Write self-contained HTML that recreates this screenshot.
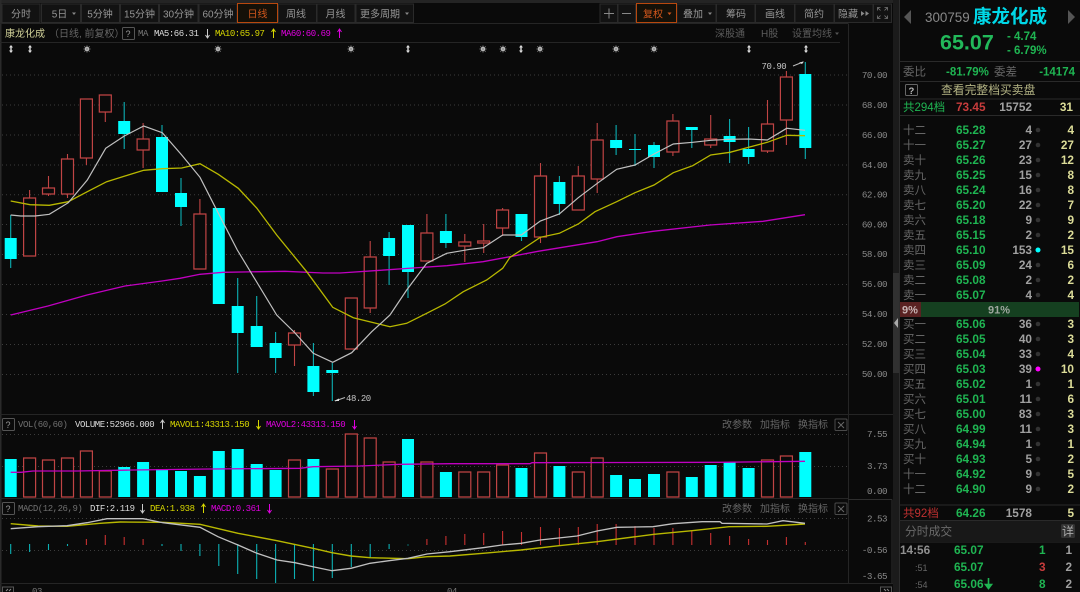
<!DOCTYPE html>
<html><head><meta charset="utf-8"><style>
html,body{margin:0;padding:0;background:#0a0a0a;width:1080px;height:592px;overflow:hidden}
svg{display:block;filter:blur(.3px)}
text{font-family:"Liberation Sans","Noto Sans CJK SC",sans-serif;white-space:pre}
.c{font-size:10px;fill:#777}
.bt{font-size:10px;fill:#959595;text-anchor:middle}
.m{font-family:"Liberation Mono","Noto Sans CJK SC",monospace;font-size:9px;letter-spacing:-.45px}
.ax{font-family:"Liberation Mono",monospace;font-size:9.2px;letter-spacing:-.5px;fill:#8a8a8a;text-anchor:end}
.l{font-size:11.5px;fill:#666}
.p{font-size:11.8px;font-weight:bold;fill:#1fb552}
.v{font-size:11.8px;font-weight:bold;fill:#a0a0a0;text-anchor:end}
.n{font-size:11.8px;font-weight:bold;fill:#dcdc98;text-anchor:end}
.d{fill:#333}
</style></head><body>
<svg width="1080" height="592" viewBox="0 0 1080 592" xmlns="http://www.w3.org/2000/svg">
<defs>
<g id="st"><circle r="2.2" fill="#ddd"/><path d="M-3.5 0H3.5M0-3.5V3.5M-2.6-2.6L2.6 2.6M-2.6 2.6L2.6-2.6" stroke="#999" stroke-width=".8"/></g>
<g id="ud"><path d="M0-4L2-1.5H-2zM0 4L2 1.5H-2z" fill="#ddd"/><path d="M0-2V2" stroke="#ddd" stroke-width="1.4"/></g>
</defs>
<rect width="1080" height="592" fill="#0a0a0a"/>
<rect width="893" height="3" fill="#242424"/>
<rect x="0" width="1.5" height="592" fill="#2a2a2a"/>

<!-- toolbar -->
<g fill="#121212" stroke="#2a2a2a">
<rect x="2" y="4" width="38" height="18.5"/><rect x="41.5" y="4" width="39" height="18.5"/><rect x="81.5" y="4" width="38" height="18.5"/><rect x="120.5" y="4" width="38" height="18.5"/><rect x="159.5" y="4" width="38.5" height="18.5"/><rect x="199" y="4" width="38" height="18.5"/>
<rect x="278.5" y="4" width="38" height="18.5"/><rect x="317" y="4" width="38" height="18.5"/><rect x="356" y="4" width="57.5" height="18.5"/>
<rect x="600" y="4" width="17.5" height="18.5"/><rect x="618" y="4" width="17.5" height="18.5"/><rect x="677" y="4" width="39" height="18.5"/><rect x="716.5" y="4" width="38.5" height="18.5"/><rect x="755.5" y="4" width="39" height="18.5"/><rect x="795" y="4" width="39" height="18.5"/><rect x="834.5" y="4" width="38.5" height="18.5"/><rect x="873.5" y="4" width="18" height="18.5"/>
</g>
<rect x="237.5" y="3.5" width="40" height="19" fill="#141008" stroke="#b8480e"/>
<rect x="636.5" y="3.5" width="40" height="19" fill="#141008" stroke="#b8480e"/>
<g>
<text class="bt" x="21" y="17.5">分时</text>
<text class="bt" x="59.5" y="17.5">5日</text>
<text class="bt" x="100" y="17.5">5分钟</text>
<text class="bt" x="139.5" y="17.5">15分钟</text>
<text class="bt" x="178.5" y="17.5">30分钟</text>
<text class="bt" x="218" y="17.5">60分钟</text>
<text class="bt" x="257.5" y="17.5" style="fill:#d0561c">日线</text>
<text class="bt" x="296" y="17.5">周线</text>
<text class="bt" x="335.5" y="17.5">月线</text>
<text class="bt" x="380" y="17.5">更多周期</text>
<text class="bt" x="653" y="17.5" style="fill:#d0561c">复权</text>
<text class="bt" x="693" y="17.5">叠加</text>
<text class="bt" x="736" y="17.5">筹码</text>
<text class="bt" x="775" y="17.5">画线</text>
<text class="bt" x="814" y="17.5">简约</text>
<text class="bt" x="848" y="17.5">隐藏</text>
</g>
<path d="M72 12.5h4l-2 2.5zM405 12.5h4l-2 2.5zM708 12.5h4l-2 2.5z" fill="#888"/>
<path d="M667.5 12.5h4l-2 2.5z" fill="#d0561c"/>
<path d="M861 11l3.5 2.5-3.5 2.5zM865.5 11l3.5 2.5-3.5 2.5z" fill="#888"/>
<path d="M604 13.5h10M609 8.5v10M622 13.5h9" stroke="#888" stroke-width="1" fill="none"/>
<path d="M877.5 10.5v-3h3M884.5 7.5h3v3M887.5 15.5v3h-3M880.5 18.5h-3v-3M878 8l2.5 2.5M887 8l-2.5 2.5M887 18l-2.5-2.5M878 18l2.5-2.5" stroke="#777" stroke-width=".8" fill="none"/>

<!-- header -->
<path d="M0 23.5H848M0 42.5H840M0 414.5H893M0 498.5H848M0 583.5H893M848.5 23.5V583M848 499.5H892" stroke="#252525" fill="none"/>
<path d="M848 499.5H892M892 499.5V583" stroke="#2e2e2e" fill="none"/>
<text class="c" x="5" y="37" style="fill:#d0d098">康龙化成</text>
<text class="c" x="49" y="37" style="fill:#666">（日线, 前复权）</text>
<rect x="122.5" y="27.5" width="12" height="12" rx="1" fill="none" stroke="#555"/><text x="125.5" y="37" style="font-size:9px;fill:#999">?</text>
<text class="m" x="138" y="36" style="fill:#777">MA</text>
<text class="m" x="154" y="36" style="fill:#ddd">MA5:66.31</text>
<text class="m" x="215" y="36" style="fill:#d8d800">MA10:65.97</text>
<text class="m" x="281" y="36" style="fill:#e000e0">MA60:60.69</text>
<path d="M207.5 29v9M205.5 35l2 3 2-3" stroke="#ccc" fill="none"/>
<path d="M273.5 38v-9M271.5 32l2-3 2 3" stroke="#d8d800" fill="none"/>
<path d="M339.5 38v-9M337.5 32l2-3 2 3" stroke="#e000e0" fill="none"/>
<text class="c" x="715" y="37" style="fill:#5c5c5c">深股通</text>
<text class="c" x="761" y="37" style="fill:#5c5c5c">H股</text>
<text class="c" x="792" y="37" style="fill:#5c5c5c">设置均线</text>
<path d="M835 32.5h4l-2 2.5z" fill="#555"/>
<use href="#ud" x="11" y="49"/><use href="#ud" x="30" y="49"/><use href="#st" x="87" y="49"/><use href="#st" x="218" y="49"/><use href="#st" x="351" y="49"/><use href="#ud" x="408" y="49"/><use href="#st" x="483" y="49"/><use href="#st" x="503" y="49"/><use href="#ud" x="521" y="49"/><use href="#st" x="540" y="49"/><use href="#st" x="616" y="49"/><use href="#st" x="654" y="49"/><use href="#ud" x="749" y="49"/><use href="#ud" x="806" y="49"/>

<!-- grid -->
<path d="M2 75H850M2 105H850M2 135H850M2 165H850M2 194.7H850M2 224.5H850M2 254.5H850M2 284.5H850M2 314.5H850M2 344.5H850M2 374.5H850M2 434.5H850M2 466.5H850M2 518.5H850M2 550.5H850" stroke="#3c3c3c" stroke-dasharray="1 3" fill="none"/>

<!-- axis -->
<text class="ax" x="887" y="78">70.00</text><text class="ax" x="887" y="108">68.00</text><text class="ax" x="887" y="138">66.00</text><text class="ax" x="887" y="168">64.00</text><text class="ax" x="887" y="197.5">62.00</text><text class="ax" x="887" y="227.5">60.00</text><text class="ax" x="887" y="257">58.00</text><text class="ax" x="887" y="287">56.00</text><text class="ax" x="887" y="317">54.00</text><text class="ax" x="887" y="347">52.00</text><text class="ax" x="887" y="377">50.00</text>
<text class="ax" x="887" y="437">7.55</text><text class="ax" x="887" y="469">3.73</text><text class="ax" x="887" y="494">0.00</text>
<text class="ax" x="887" y="521.5">2.53</text><text class="ax" x="887" y="553">-0.56</text><text class="ax" x="887" y="579">-3.65</text>

<!-- wicks -->
<path d="M10.7 215V268M124.2 102V149M162 125V192M181 178V226M237.7 278V373M256.7 296V326M275.6 332V373M313.4 343V396M332.3 363V401M389.1 232V285M408 225V298M445.9 214V248M521.5 214V241M559.4 176V215M616.1 125V155M635 134V166M654 142V168M691.8 127V148M729.6 119V163M748.6 127V164M805.3 62V159" stroke="#0cb0b4" stroke-width="1.1" fill="none"/>
<path d="M29.6 190V198M48.5 176V196M67.5 154V198M86.4 158V165M105.3 112V122M143.1 123V168M199.9 199V214M294.5 330V366M370.2 241V313M426.9 214V233M464.8 234V262M483.7 224V253M502.6 208V236M540.5 163V243M578.3 166V176M597.2 123V193M672.9 114V156M710.7 115V148M767.5 100V153M786.4 71V145" stroke="#c04444" stroke-width="1.1" fill="none"/>
<!-- candle bodies -->
<path d="M23.6 198h12v58h-12zM42.5 188h12v6h-12zM61.5 159h12v35h-12zM80.4 99h12v59h-12zM99.3 95h12v17h-12zM137.1 139h12v11h-12zM193.9 214h12v55h-12zM288.5 333h12v12h-12zM345.3 298h12v51h-12zM364.2 257h12v51h-12zM420.9 233h12v28h-12zM458.8 242h12v4h-12zM477.7 241h12v2h-12zM496.6 210h12v18h-12zM534.5 176h12v61h-12zM572.3 176h12v34h-12zM591.2 140h12v39h-12zM666.9 121h12v31h-12zM704.7 139h12v6h-12zM761.5 124h12v27h-12zM780.4 77h12v43h-12z" fill="#0a0a0a" stroke="#c04444" stroke-width="1.2"/>
<path d="M4.7 238h12v21h-12zM118.2 121h12v13h-12zM156 137h12v55h-12zM175 193h12v14h-12zM212.8 208h12v96h-12zM231.7 306h12v27h-12zM250.7 326h12v21h-12zM269.6 343h12v15h-12zM307.4 366h12v26h-12zM326.3 370h12v3h-12zM383.1 238h12v18h-12zM402 225h12v47h-12zM439.9 231h12v12h-12zM515.5 214h12v23h-12zM553.4 182h12v22h-12zM610.1 140h12v8h-12zM629 149h12v1h-12zM648 145h12v12h-12zM685.8 127h12v3h-12zM723.6 136h12v6h-12zM742.6 149h12v8h-12zM799.3 74h12v74h-12z" fill="#00ffff"/>
<!-- MAs -->
<path d="M10.7 315L48 306L87 295L125 286L162 281L180 278.3L200 274.3L223 272.3L285 271.3L323 273L340 273L380 270.3L413 268L447 265.7L483 261.7L510 256.7L538 251.3L597 241.7L617 236.7L653 231.3L710 225L763 221.3L805 214.7" fill="none" stroke="#c000c0" stroke-width="1.3"/>
<path d="M10.7 201L30 204.7L49.3 205.3L68.3 201.7L87.3 191.7L106.7 181.7L125 176L143.7 170.3L162.3 168.7L181.7 168L200 163.7L218.3 174.3L238.3 188.3L256.7 208L276.7 235L306.7 271.7L332.7 307.3L353.3 317.7L371.7 322.3L390 326.7L406.7 323.3L426.7 313.3L445 304L463.3 291.7L486.7 280L502.7 268.3L510 257.3L521.3 250L540.3 237.3L559.3 233.3L578.3 224L595 211.7L616.7 201.7L635 192.7L654 185L673.3 172.7L692.7 165.7L710.7 155L730 152.3L748.7 147.3L767.3 142.3L786.7 135.3L805 135.7" fill="none" stroke="#b8b800" stroke-width="1.3"/>
<path d="M10.7 215L20.7 216L35 216L49.3 214.3L68.3 202.7L87.3 180L105.7 148.3L124.3 136L143.7 126L162.3 132.7L181.7 155L200 177.3L215 206.7L237.3 250L276.7 315L295 333L313.3 353.3L332.7 362.3L351.7 352.7L371.7 331.7L390 315L406.7 290L426.7 263.3L446.7 253.3L470 249.3L483.3 247.7L502.7 235L521.3 235L540.3 221L559.3 214L578.3 197.7L597.3 183.3L616.7 169.3L635 165L654 154L673.3 144L692.7 142.3L710.7 140.3L730 139.3L748.7 139L767.3 140L786.7 128.3L805 130.3" fill="none" stroke="#c0c0c0" stroke-width="1.2"/>
<!-- hi/lo -->
<text class="m" x="761.5" y="69" style="fill:#c4c4c4">70.90</text>
<path d="M793 66L803 62" stroke="#bbb"/><path d="M799 62.5L804 61.5L802 64z" fill="#ddd"/>
<text class="m" x="346" y="401" style="fill:#c4c4c4">48.20</text>
<path d="M335 401L345 397.5" stroke="#bbb"/><path d="M334 401L339 398.5L339 401z" fill="#ddd"/>

<!-- VOL header -->
<rect x="2.5" y="418.5" width="12" height="12" rx="1" fill="none" stroke="#555"/><text x="5.5" y="428" style="font-size:9px;fill:#999">?</text>
<text class="m" x="18" y="427" style="fill:#707070">VOL(60,60)</text>
<text class="m" x="75" y="427" style="fill:#ddd">VOLUME:52966.000</text>
<text class="m" x="170" y="427" style="fill:#d8d800">MAVOL1:43313.150</text>
<text class="m" x="266" y="427" style="fill:#e000e0">MAVOL2:43313.150</text>
<path d="M162.5 429v-9M160.5 423l2-3 2 3" stroke="#ccc" fill="none"/>
<path d="M258.5 420v9M256.5 426l2 3 2-3" stroke="#d8d800" fill="none"/>
<path d="M354.5 420v9M352.5 426l2 3 2-3" stroke="#e000e0" fill="none"/>
<text class="c" x="722" y="428" style="fill:#666">改参数</text><text class="c" x="760" y="428" style="fill:#666">加指标</text><text class="c" x="798" y="428" style="fill:#666">换指标</text>
<text class="c" x="722" y="512" style="fill:#666">改参数</text><text class="c" x="760" y="512" style="fill:#666">加指标</text><text class="c" x="798" y="512" style="fill:#666">换指标</text>
<rect x="835" y="419" width="12" height="11.5" rx="1" fill="none" stroke="#4a4a4a"/><path d="M838 422l6 6M844 422l-6 6" stroke="#666"/>
<rect x="835" y="503" width="12" height="11.5" rx="1" fill="none" stroke="#4a4a4a"/><path d="M838 506l6 6M844 506l-6 6" stroke="#666"/>

<!-- volume bars -->
<path d="M23.6 458h12v39h-12zM42.5 460h12v37h-12zM61.5 458h12v39h-12zM80.4 451h12v46h-12zM99.3 471h12v26h-12zM288.5 460h12v37h-12zM326.3 469h12v28h-12zM345.3 434h12v63h-12zM364.2 438h12v59h-12zM383.1 462h12v35h-12zM420.9 462h12v35h-12zM458.8 472h12v25h-12zM477.7 472h12v25h-12zM496.6 465h12v32h-12zM534.5 453h12v44h-12zM572.3 472h12v25h-12zM591.2 458h12v39h-12zM666.9 472h12v25h-12zM761.5 460h12v37h-12zM780.4 456h12v41h-12z" fill="#0a0a0a" stroke="#c04444" stroke-width="1.2"/>
<path d="M4.7 459h12v38h-12zM118.2 467h12v30h-12zM137.1 462h12v35h-12zM156 469h12v28h-12zM175 471h12v26h-12zM193.9 476h12v21h-12zM212.8 451h12v46h-12zM231.7 449h12v48h-12zM250.7 464h12v33h-12zM269.6 470h12v27h-12zM307.4 459h12v38h-12zM402 439h12v58h-12zM439.9 472h12v25h-12zM515.5 468h12v29h-12zM553.4 466h12v31h-12zM610.1 475h12v22h-12zM629 479h12v18h-12zM648 474h12v23h-12zM685.8 477h12v20h-12zM704.7 465h12v32h-12zM723.6 462h12v35h-12zM742.6 468h12v29h-12zM799.3 452h12v45h-12z" fill="#00ffff"/>
<path d="M10.7 472.3L21 472.3L33 471L77 471L133 470L210 469L300 468.3L313 466.7L360 466L400 464.3L450 463.7L530 463.7L532 462.7L720 462.3L805 461.3" fill="none" stroke="#c000c0" stroke-width="1.3"/>

<!-- MACD header -->
<rect x="2.5" y="502.5" width="12" height="12" rx="1" fill="none" stroke="#555"/><text x="5.5" y="512" style="font-size:9px;fill:#999">?</text>
<text class="m" x="18" y="511" style="fill:#707070">MACD(12,26,9)</text>
<text class="m" x="90" y="511" style="fill:#ddd">DIF:2.119</text>
<text class="m" x="150" y="511" style="fill:#d8d800">DEA:1.938</text>
<text class="m" x="211" y="511" style="fill:#e000e0">MACD:0.361</text>
<path d="M142.5 504v9M140.5 510l2 3 2-3" stroke="#ccc" fill="none"/>
<path d="M203.5 513v-9M201.5 507l2-3 2 3" stroke="#d8d800" fill="none"/>
<path d="M269.5 504v9M267.5 510l2 3 2-3" stroke="#e000e0" fill="none"/>

<!-- MACD bars -->
<path d="M10.7 544V554M29.6 544V552M48.5 544V550M67.5 544V546M162 544V546M181 544V551M199.9 544V556M218.8 544V566M237.7 544V574M256.7 544V579M275.6 544V583M294.5 544V579M313.4 544V581M332.3 544V578M351.3 544V567M370.2 544V558M389.1 544V549M408 544.5V545.5" stroke="#0cb0b4" stroke-width="1.1" fill="none"/>
<path d="M86.4 539V545M105.3 535V545M124.2 537V545M143.1 539V545M426.9 539V545M445.9 536V545M464.8 534V545M483.7 533V545M502.6 531V545M521.5 532V545M540.5 527V545M559.4 528V545M578.3 527V545M597.2 524V545M616.1 524V545M635 526V545M654 528V545M672.9 528V545M691.8 531V545M710.7 533V545M729.6 536V545M748.6 539V545M767.5 540V545M786.4 537V545M805.3 542V545" stroke="#c83030" stroke-width="1.1" fill="none"/>
<path d="M10.7 523.7L38 526L67 526.3L100 523.3L120 522L163 522.3L200 524.3L238 533.3L277 540.7L313 548.3L332 552.7L351 556L370 557.7L408 558.7L427 556.7L450 556L483 553.3L521 550L559 545.7L597 541.7L654 534.3L692 530.7L729 526.7L767 526.3L805 524" fill="none" stroke="#b8b800" stroke-width="1.4"/>
<path d="M10.7 528.7L38 526.7L67 525.7L87 522.7L107 518.7L143 518.7L163 522.7L200 527.3L218 536.7L238 545L257 553.3L277 560L295 562.7L313 566.7L332 570.7L351 568.3L370 563.3L389 560.7L408 558.3L427 554L450 551.7L483 547.7L502 545L521 543.3L540 540L577 536L597 531L617 527.3L653 526.7L673 523.7L702 521.7L720 521.7L722 523.3L767 524L783 520.7L805 523.3" fill="none" stroke="#c0c0c0" stroke-width="1.3"/>

<!-- bottom -->
<text class="m" x="32" y="594" style="fill:#777">03</text><text class="m" x="447" y="594" style="fill:#777">04</text>
<rect x="2.5" y="587" width="11" height="8" fill="none" stroke="#555"/><path d="M8 589l-2 2M11 589l-2 2" stroke="#888"/>
<rect x="880.5" y="587" width="11" height="8" fill="none" stroke="#555"/><path d="M884 589l2 2M887 589l2 2" stroke="#888"/>

<!-- scrollbar -->
<rect x="893" y="0" width="6" height="592" fill="#1b1b1b"/>
<rect x="893" y="273" width="6" height="100" fill="#303030"/>
<path d="M898 318l-4 5 4 5z" fill="#aaa"/>
<rect x="899" y="0" width="181" height="592" fill="#0a0a0a"/>
<path d="M899.5 0V592" stroke="#2c2c2c"/>

<!-- side panel -->
<path d="M904 17l7-7v14z" fill="#555"/>
<path d="M1075 17l-7-7v14z" fill="#555"/>
<text x="925" y="22" style="font-size:13.4px;fill:#888">300759</text>
<text x="973" y="23" style="font-size:18.5px;font-weight:bold;fill:#00d8e8">康龙化成</text>
<text x="940" y="49.5" style="font-size:21.5px;font-weight:bold;fill:#22b95a">65.07</text>
<text x="1007" y="40" style="font-size:11.5px;font-weight:bold;fill:#1fb552">- 4.74</text>
<text x="1007" y="54" style="font-size:11.5px;font-weight:bold;fill:#1fb552">- 6.79%</text>
<path d="M899 61.5H1080M899 81.5H1080M899 99H1080M899 115.5H1080M899 505H1080M899 520.5H1080M899 542H1080" stroke="#2a2a2a" fill="none"/>
<text class="l" x="903" y="75.5">委比</text>
<text x="946" y="75.5" style="font-size:11.5px;font-weight:bold;fill:#1fb552">-81.79%</text>
<text class="l" x="994" y="75.5">委差</text>
<text x="1075" y="75.5" style="font-size:11.5px;font-weight:bold;fill:#1fb552;text-anchor:end">-14174</text>
<rect x="905.5" y="84.5" width="12" height="11" rx="1" fill="none" stroke="#666"/><text x="908.5" y="94" style="font-size:9.5px;font-weight:bold;fill:#bbb">?</text>
<text x="941" y="94" style="font-size:11.8px;fill:#b4b484">查看完整档买卖盘</text>
<text x="903" y="111" style="font-size:11.5px;fill:#1fb552">共294档</text>
<text class="p" x="956" y="111" style="fill:#c83c3c">73.45</text>
<text class="v" x="1032" y="111">15752</text>
<text class="n" x="1073" y="111">31</text>

<g transform="translate(0,134)"><text class="l" x="903">十二</text><text class="p" x="956">65.28</text><text class="v" x="1032">4</text><circle class="d" cx="1038" cy="-4" r="2.3"/><text class="n" x="1074">4</text></g>
<g transform="translate(0,149)"><text class="l" x="903">十一</text><text class="p" x="956">65.27</text><text class="v" x="1032">27</text><circle class="d" cx="1038" cy="-4" r="2.3"/><text class="n" x="1074">27</text></g>
<g transform="translate(0,164)"><text class="l" x="903">卖十</text><text class="p" x="956">65.26</text><text class="v" x="1032">23</text><circle class="d" cx="1038" cy="-4" r="2.3"/><text class="n" x="1074">12</text></g>
<g transform="translate(0,179)"><text class="l" x="903">卖九</text><text class="p" x="956">65.25</text><text class="v" x="1032">15</text><circle class="d" cx="1038" cy="-4" r="2.3"/><text class="n" x="1074">8</text></g>
<g transform="translate(0,194)"><text class="l" x="903">卖八</text><text class="p" x="956">65.24</text><text class="v" x="1032">16</text><circle class="d" cx="1038" cy="-4" r="2.3"/><text class="n" x="1074">8</text></g>
<g transform="translate(0,209)"><text class="l" x="903">卖七</text><text class="p" x="956">65.20</text><text class="v" x="1032">22</text><circle class="d" cx="1038" cy="-4" r="2.3"/><text class="n" x="1074">7</text></g>
<g transform="translate(0,224)"><text class="l" x="903">卖六</text><text class="p" x="956">65.18</text><text class="v" x="1032">9</text><circle class="d" cx="1038" cy="-4" r="2.3"/><text class="n" x="1074">9</text></g>
<g transform="translate(0,239)"><text class="l" x="903">卖五</text><text class="p" x="956">65.15</text><text class="v" x="1032">2</text><circle class="d" cx="1038" cy="-4" r="2.3"/><text class="n" x="1074">2</text></g>
<g transform="translate(0,254)"><text class="l" x="903">卖四</text><text class="p" x="956">65.10</text><text class="v" x="1032">153</text><circle cx="1038" cy="-4" r="2.5" fill="#00ffff"/><text class="n" x="1074">15</text></g>
<g transform="translate(0,269)"><text class="l" x="903">卖三</text><text class="p" x="956">65.09</text><text class="v" x="1032">24</text><circle class="d" cx="1038" cy="-4" r="2.3"/><text class="n" x="1074">6</text></g>
<g transform="translate(0,284)"><text class="l" x="903">卖二</text><text class="p" x="956">65.08</text><text class="v" x="1032">2</text><circle class="d" cx="1038" cy="-4" r="2.3"/><text class="n" x="1074">2</text></g>
<g transform="translate(0,299)"><text class="l" x="903">卖一</text><text class="p" x="956">65.07</text><text class="v" x="1032">4</text><circle class="d" cx="1038" cy="-4" r="2.3"/><text class="n" x="1074">4</text></g>

<rect x="900" y="302" width="21" height="15" fill="#5a2222"/>
<rect x="921" y="302" width="158" height="15" fill="#154020"/>
<text x="902" y="313.5" style="font-size:11px;font-weight:bold;fill:#c8b4b4">9%</text>
<text x="988" y="313.5" style="font-size:11px;font-weight:bold;fill:#a0a8a0">91%</text>

<g transform="translate(0,328)"><text class="l" x="903">买一</text><text class="p" x="956">65.06</text><text class="v" x="1032">36</text><circle class="d" cx="1038" cy="-4" r="2.3"/><text class="n" x="1074">3</text></g>
<g transform="translate(0,343)"><text class="l" x="903">买二</text><text class="p" x="956">65.05</text><text class="v" x="1032">40</text><circle class="d" cx="1038" cy="-4" r="2.3"/><text class="n" x="1074">3</text></g>
<g transform="translate(0,358)"><text class="l" x="903">买三</text><text class="p" x="956">65.04</text><text class="v" x="1032">33</text><circle class="d" cx="1038" cy="-4" r="2.3"/><text class="n" x="1074">4</text></g>
<g transform="translate(0,373)"><text class="l" x="903">买四</text><text class="p" x="956">65.03</text><text class="v" x="1032">39</text><circle cx="1038" cy="-4" r="2.5" fill="#ff00ff"/><text class="n" x="1074">10</text></g>
<g transform="translate(0,388)"><text class="l" x="903">买五</text><text class="p" x="956">65.02</text><text class="v" x="1032">1</text><circle class="d" cx="1038" cy="-4" r="2.3"/><text class="n" x="1074">1</text></g>
<g transform="translate(0,403)"><text class="l" x="903">买六</text><text class="p" x="956">65.01</text><text class="v" x="1032">11</text><circle class="d" cx="1038" cy="-4" r="2.3"/><text class="n" x="1074">6</text></g>
<g transform="translate(0,418)"><text class="l" x="903">买七</text><text class="p" x="956">65.00</text><text class="v" x="1032">83</text><circle class="d" cx="1038" cy="-4" r="2.3"/><text class="n" x="1074">3</text></g>
<g transform="translate(0,433)"><text class="l" x="903">买八</text><text class="p" x="956">64.99</text><text class="v" x="1032">11</text><circle class="d" cx="1038" cy="-4" r="2.3"/><text class="n" x="1074">3</text></g>
<g transform="translate(0,448)"><text class="l" x="903">买九</text><text class="p" x="956">64.94</text><text class="v" x="1032">1</text><circle class="d" cx="1038" cy="-4" r="2.3"/><text class="n" x="1074">1</text></g>
<g transform="translate(0,463)"><text class="l" x="903">买十</text><text class="p" x="956">64.93</text><text class="v" x="1032">5</text><circle class="d" cx="1038" cy="-4" r="2.3"/><text class="n" x="1074">2</text></g>
<g transform="translate(0,478)"><text class="l" x="903">十一</text><text class="p" x="956">64.92</text><text class="v" x="1032">9</text><circle class="d" cx="1038" cy="-4" r="2.3"/><text class="n" x="1074">5</text></g>
<g transform="translate(0,493)"><text class="l" x="903">十二</text><text class="p" x="956">64.90</text><text class="v" x="1032">9</text><circle class="d" cx="1038" cy="-4" r="2.3"/><text class="n" x="1074">2</text></g>

<text x="903" y="517" style="font-size:11.5px;fill:#c03030">共92档</text>
<text class="p" x="956" y="517">64.26</text>
<text class="v" x="1032" y="517">1578</text>
<text class="n" x="1074" y="517">5</text>

<rect x="900" y="521" width="180" height="21" fill="#181818"/>
<text x="905" y="535.5" style="font-size:11.8px;fill:#6a6a6a">分时成交</text>
<rect x="1061" y="524" width="14" height="14" rx="1.5" fill="#333"/>
<text x="1062" y="535.5" style="font-size:12px;fill:#aaa">详</text>

<text x="900" y="554" style="font-size:11.8px;font-weight:bold;fill:#909090">14:56</text>
<text class="p" x="954" y="554">65.07</text>
<text class="p" x="1039" y="554">1</text>
<text class="v" x="1072" y="554">1</text>
<text x="915" y="571" style="font-size:9px;fill:#666">:51</text>
<text class="p" x="954" y="571">65.07</text>
<text class="p" x="1039" y="571" style="fill:#c83c3c">3</text>
<text class="v" x="1072" y="571">2</text>
<text x="915" y="588" style="font-size:9px;fill:#666">:54</text>
<text class="p" x="954" y="588">65.06</text>
<path d="M988.5 578v10M985.5 584.5l3 4 3-4z" stroke="#1fb552" stroke-width="1.6" fill="#1fb552"/>
<text class="p" x="1039" y="588">8</text>
<text class="v" x="1072" y="588">2</text>
</svg>
</body></html>
